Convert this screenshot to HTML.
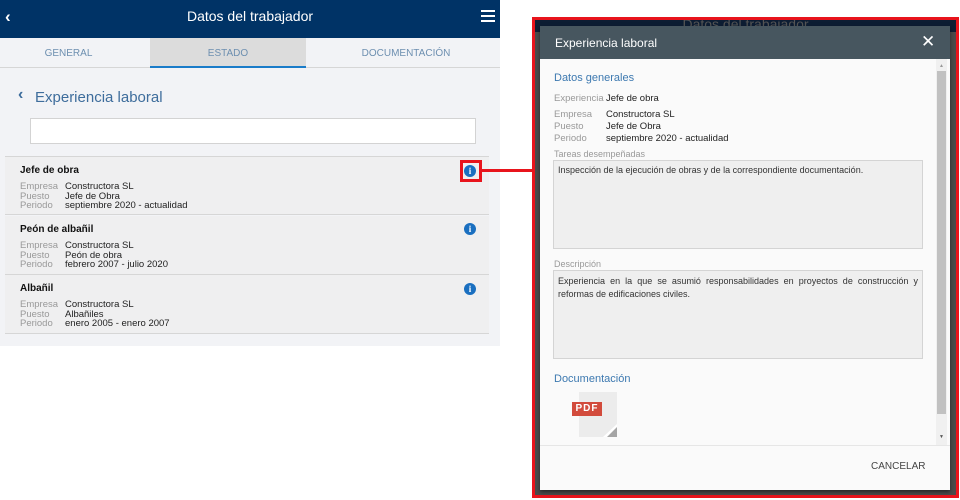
<!DOCTYPE html>
<html><head><meta charset="utf-8"><style>
*{margin:0;padding:0;box-sizing:border-box}
body{width:960px;height:500px;background:#fff;font-family:"Liberation Sans",sans-serif;position:relative;overflow:hidden}
.a{position:absolute}
.row{position:absolute;left:5px;width:484px;background:#efeff0;border-bottom:1px solid #d6d6d6}
.row b{position:absolute;left:15px;top:8px;font-size:10px;color:#111}
.row .d{position:absolute;left:15px;top:25px;font-size:9.5px;line-height:9.5px;color:#222}
.row .d span{display:inline-block;width:45px;color:#999}
.info{position:absolute;left:464px;width:12px;height:12px;border-radius:50%;background:#1a6fc0;color:#fff;font-size:9px;font-weight:bold;text-align:center;line-height:12px;font-family:"Liberation Serif",serif}
.m{font-size:9.5px;color:#222}
.m span{display:inline-block;width:52px;color:#999}
</style></head><body>
<div class="a" style="left:0;top:0;width:500px;height:346px;background:#f2f3f6"></div>
<div class="a" style="left:0;top:0;width:500px;height:38px;background:#003366;color:#fff">
 <div class="a" style="left:5px;top:7px;font-size:17px;font-weight:bold">‹</div>
 <div class="a" style="left:0;width:500px;top:8px;text-align:center;font-size:14px">Datos del trabajador</div>
 <div class="a" style="left:481px;top:10px;width:14px;height:2px;background:#fff;box-shadow:0 5px 0 #fff,0 10px 0 #fff"></div>
</div>
<div class="a" style="left:0;top:38px;width:500px;height:30px;background:#f2f3f6;border-bottom:1px solid #d6d6d6"></div>
<div class="a" style="left:150px;top:38px;width:156px;height:30px;background:#dcdcdc;border-bottom:2px solid #1a7cc9"></div>
<div class="a" style="left:0;top:48px;width:137px;text-align:center;font-size:10px;color:#6d8fb0">GENERAL</div>
<div class="a" style="left:150px;top:48px;width:156px;text-align:center;font-size:10px;color:#6d8fb0">ESTADO</div>
<div class="a" style="left:306px;top:48px;width:200px;text-align:center;font-size:10px;color:#6d8fb0">DOCUMENTACIÓN</div>
<div class="a" style="left:18px;top:86px;font-size:16px;color:#3a6a9a;font-weight:bold">‹</div>
<div class="a" style="left:35px;top:89px;font-size:15px;color:#3e6d9c">Experiencia laboral</div>
<div class="a" style="left:30px;top:118px;width:446px;height:26px;background:#fff;border:1px solid #d3d3d3"></div>
<div class="a" style="left:5px;top:156px;width:484px;height:1px;background:#d6d6d6"></div>
<div class="row" style="top:157px;height:58px"><b>Jefe de obra</b><div class="d"><span>Empresa</span>Constructora SL<br><span>Puesto</span>Jefe de Obra<br><span>Periodo</span>septiembre 2020 - actualidad</div></div>
<div class="info" style="top:165px">i</div>
<div class="row" style="top:216px;height:59px"><b>Peón de albañil</b><div class="d"><span>Empresa</span>Constructora SL<br><span>Puesto</span>Peón de obra<br><span>Periodo</span>febrero 2007 - julio 2020</div></div>
<div class="info" style="top:223px">i</div>
<div class="row" style="top:275px;height:59px"><b>Albañil</b><div class="d"><span>Empresa</span>Constructora SL<br><span>Puesto</span>Albañiles<br><span>Periodo</span>enero 2005 - enero 2007</div></div>
<div class="info" style="top:283px">i</div>
<div class="a" style="left:460px;top:160px;width:22px;height:22px;border:3px solid #e8141c"></div>
<div class="a" style="left:482px;top:169px;width:52px;height:3px;background:#e8141c"></div>
<div class="a" style="left:532px;top:17px;width:427px;height:481px;border:3px solid #e8141c;background:#4b4b4b">
 <div class="a" style="left:0;top:0;width:421px;height:12px;background:#0d1d33;color:#555;font-size:14px;text-align:center;line-height:8px;overflow:hidden">Datos del trabajador</div>
</div>
<div class="a" style="left:540px;top:26px;width:410px;height:464px;background:#fafafa;box-shadow:0 2px 4px rgba(0,0,0,.5)">
 <div class="a" style="left:0;top:0;width:410px;height:33px;background:#47565f;color:#fff">
  <div class="a" style="left:15px;top:10px;font-size:12px">Experiencia laboral</div>
  <div class="a" style="left:381px;top:6px;font-size:17px">✕</div>
 </div>
 <div class="a" style="left:396px;top:33px;width:11px;height:386px;background:#f0f0f0">
  <div class="a" style="left:1px;top:12px;width:9px;height:343px;background:#c1c1c1"></div>
  <div class="a" style="left:3px;top:4px;font-size:5px;color:#999">▲</div>
  <div class="a" style="left:3px;top:375px;font-size:5px;color:#555">▼</div>
 </div>
 <div class="a" style="left:14px;top:46px;font-size:11px;color:#3d79b0">Datos generales</div>
 <div class="a m" style="left:14px;top:67px"><span>Experiencia</span>Jefe de obra</div>
 <div class="a m" style="left:14px;top:83px;line-height:12px"><span>Empresa</span>Constructora SL<br><span>Puesto</span>Jefe de Obra<br><span>Periodo</span>septiembre 2020 - actualidad</div>
 <div class="a" style="left:14px;top:123px;font-size:9px;color:#999">Tareas desempeñadas</div>
 <div class="a" style="left:13px;top:134px;width:370px;height:89px;background:#efefef;border:1px solid #d4d4d4;font-size:9px;color:#333;padding:4px 4px">Inspección de la ejecución de obras y de la correspondiente documentación.</div>
 <div class="a" style="left:14px;top:233px;font-size:9px;color:#999">Descripción</div>
 <div class="a" style="left:13px;top:244px;width:370px;height:89px;background:#efefef;border:1px solid #d4d4d4;font-size:9px;color:#333;padding:4px 4px;text-align:justify;line-height:13px">Experiencia en la que se asumió responsabilidades en proyectos de construcción y reformas de edificaciones civiles.</div>
 <div class="a" style="left:14px;top:347px;font-size:11px;color:#3d79b0">Documentación</div>
 <div class="a" style="left:39px;top:366px;width:38px;height:45px;background:#ececec"></div>
 <svg class="a" style="left:63px;top:398px" width="14" height="13"><path d="M0 13L14 0V13Z" fill="#fff"/><path d="M4 13L14 3V13Z" fill="#a5a5a5"/></svg>
 <div class="a" style="left:32px;top:376px;width:30px;height:14px;background:#d24b3c;color:#fff;font-size:10px;font-weight:bold;text-align:center;line-height:14px;letter-spacing:1px">PDF</div>
 <div class="a" style="left:0;top:419px;width:410px;height:1px;background:#e6e6e6"></div>
 <div class="a" style="left:331px;top:435px;font-size:10px;color:#444">CANCELAR</div>
</div>
</body></html>
